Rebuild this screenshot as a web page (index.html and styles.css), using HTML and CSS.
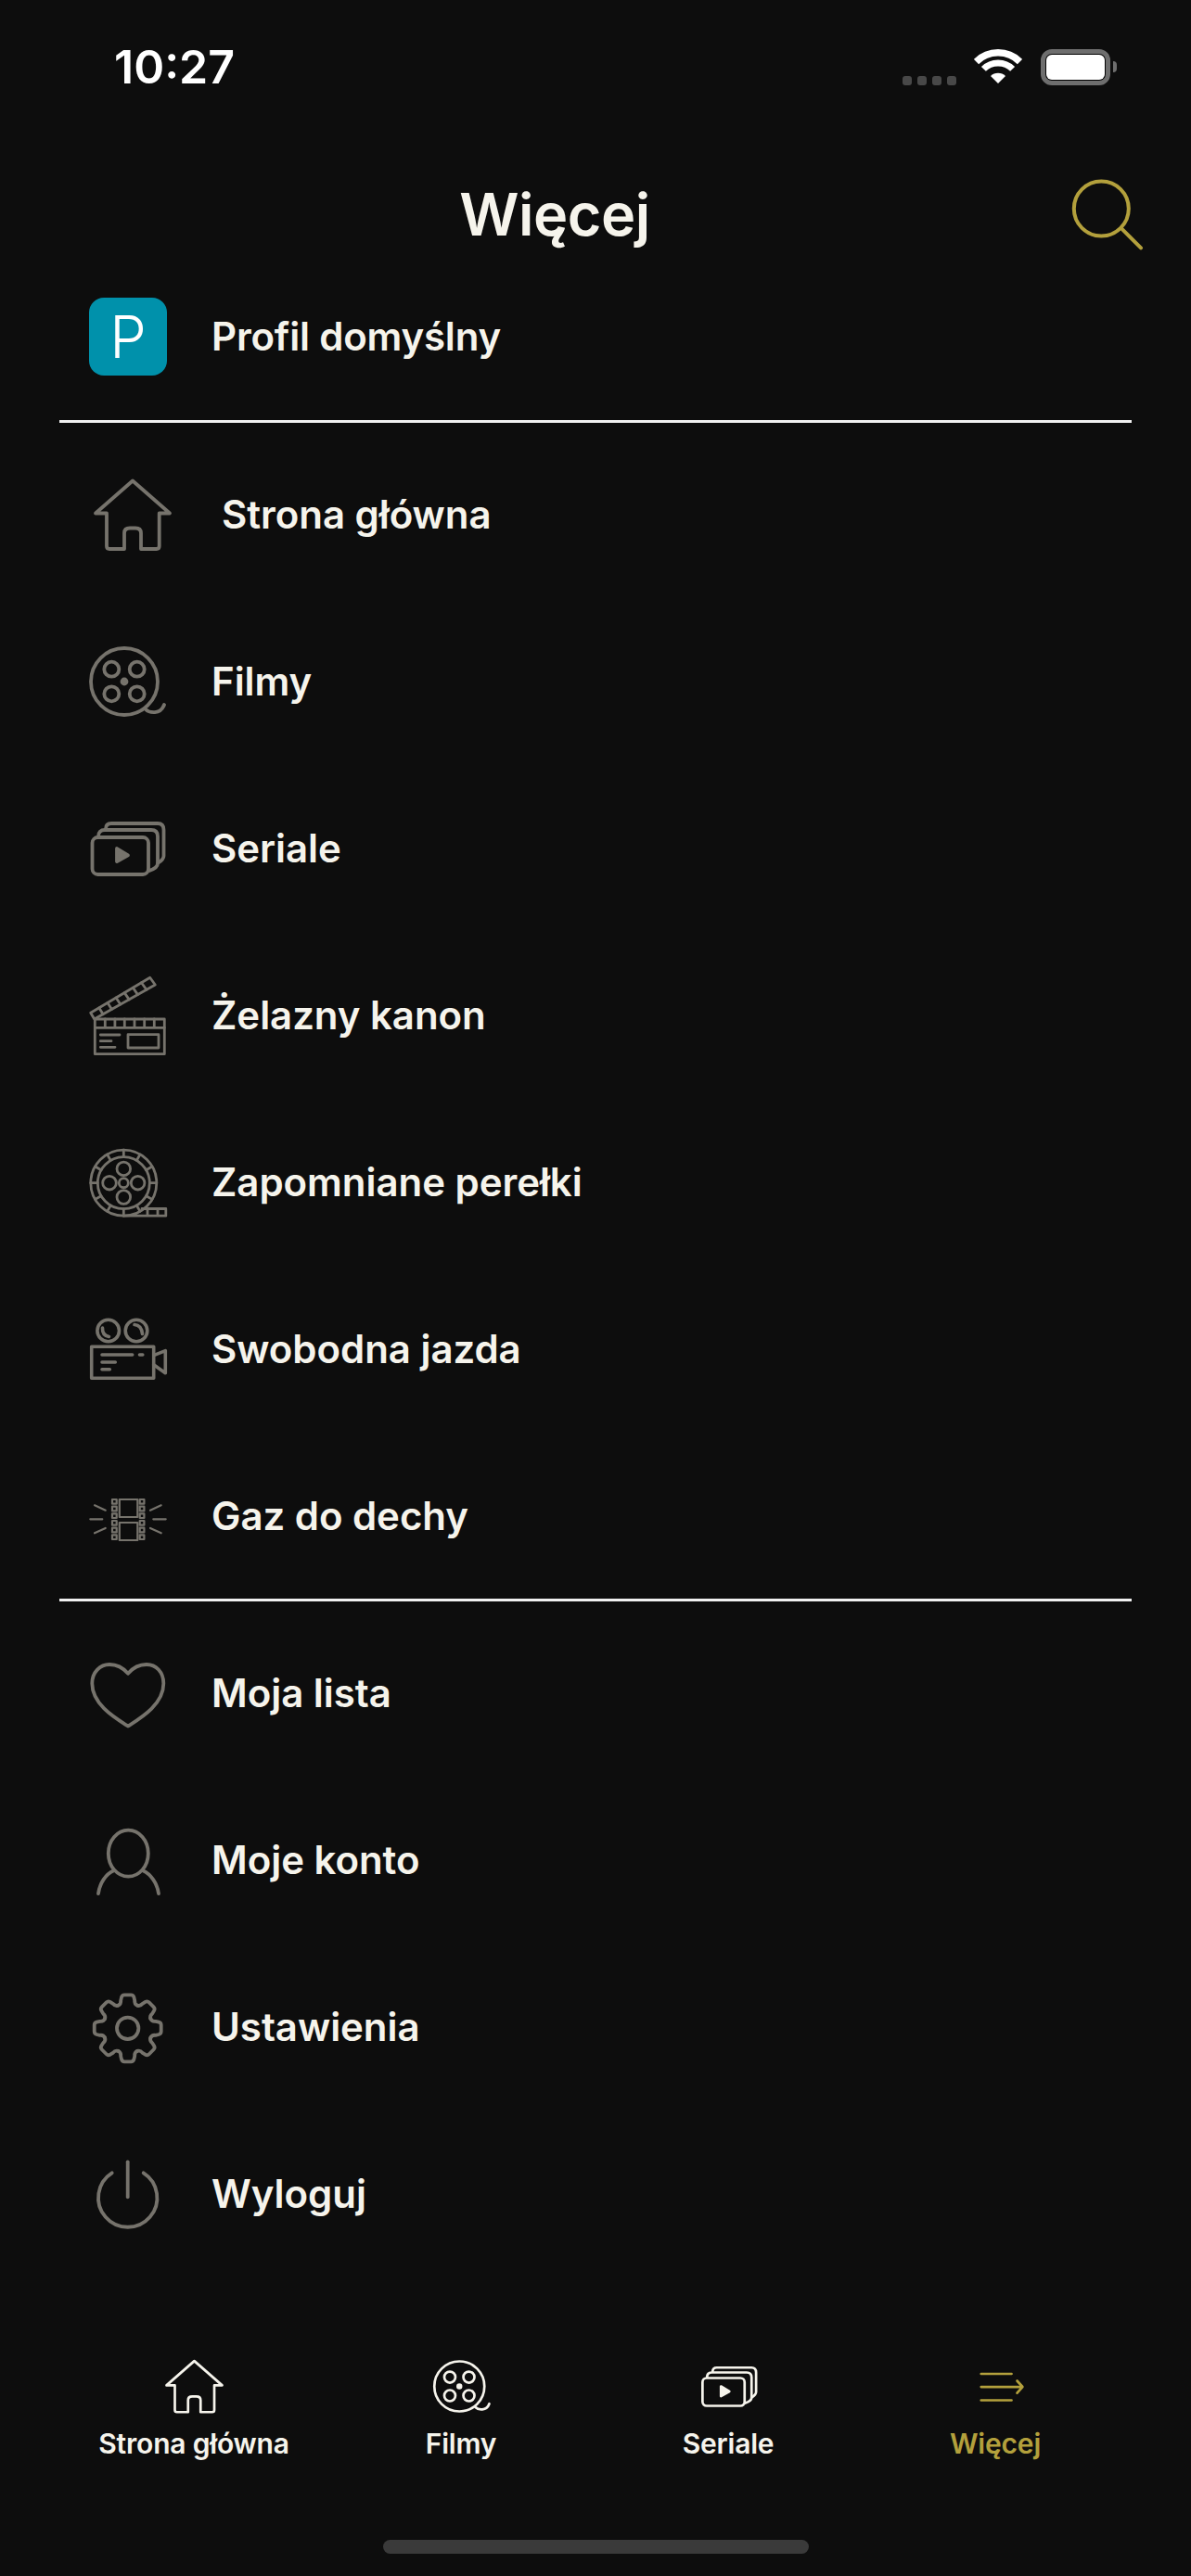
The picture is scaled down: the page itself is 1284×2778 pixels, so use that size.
FILE: index.html
```html
<!DOCTYPE html>
<html lang="pl">
<head>
<meta charset="utf-8">
<title>Więcej</title>
<link rel="stylesheet" href="styles.css">
</head>
<body>
<svg class="sprite" width="0" height="0" aria-hidden="true">
  <defs>
    <symbol id="i-home" viewBox="0 0 100 100">
      <path d="M50 13.5 L90 48.5 H78.7 V84 Q78.7 87 75.7 87 H59 V70 Q59 64.5 53 64.5 H47 Q41 64.5 41 70 V87 H25 Q22 87 22 84 V48.5 H10 Z"/>
    </symbol>
    <symbol id="i-film" viewBox="0 0 100 100">
      <circle cx="47" cy="50" r="36"/>
      <circle cx="33.3" cy="36.7" r="8"/>
      <circle cx="60.7" cy="36.7" r="8"/>
      <circle cx="33.3" cy="63.3" r="8"/>
      <circle cx="60.7" cy="63.3" r="8"/>
      <circle class="solid" cx="47" cy="50" r="2.5"/>
      <path d="M70 80 C74 84 86 86 90 75"/>
    </symbol>
    <symbol id="i-series" viewBox="0 0 100 100">
      <rect x="12.5" y="38" width="60.5" height="40" rx="6"/>
      <path d="M19 37 Q19 30 26 30 H76 Q83 30 83 37 V66 Q83 71 74 74"/>
      <path d="M27 29 Q27 23 33 23 H83 Q89.5 23 89.5 30 V58 Q89.5 62 83 66"/>
      <path class="solid" d="M39 50 L51 57.3 L39 64 Z"/>
    </symbol>
  </defs>
</svg>

<main class="screen">
  <div class="status">
    <span class="clock">10:27</span>
    <div class="status-icons">
      <div class="signal"><i></i><i></i><i></i><i></i></div>
      <svg class="wifi" viewBox="0 0 52 40" width="52" height="40">
        <path class="wifi-arc" stroke-width="7.5" d="M2.5 14.5 A33.3 33.3 0 0 1 49.5 14.5"/>
        <path class="wifi-arc" stroke-width="7" d="M10.4 22.4 A22 22 0 0 1 41.6 22.4"/>
        <path class="wifi-dot" d="M26 38 L18 30 A11.3 11.3 0 0 1 34 30 Z"/>
      </svg>
      <div class="battery"><div class="battery-level"></div></div>
    </div>
  </div>

  <header class="header">
    <h1 class="title">Więcej</h1>
    <svg class="search" viewBox="0 0 88 88" width="88" height="88">
      <circle cx="35.3" cy="37" r="29.5"/>
      <path d="M57.3 58.7 L78 79.3"/>
    </svg>
  </header>

  <div class="profile">
    <div class="avatar">P</div>
    <span class="label">Profil domyślny</span>
  </div>
  <hr class="rule">

  <nav class="menu">
    <a class="row row-home">
      <svg class="icon"><use href="#i-home"/></svg>
      <span class="label">Strona główna</span>
    </a>
    <a class="row">
      <svg class="icon"><use href="#i-film"/></svg>
      <span class="label">Filmy</span>
    </a>
    <a class="row">
      <svg class="icon"><use href="#i-series"/></svg>
      <span class="label">Seriale</span>
    </a>
    <a class="row">
      <svg class="icon icon-fine" viewBox="0 0 100 100">
        <rect x="15.3" y="54" width="75" height="37.7"/>
        <path d="M15.3 63.3 H90.3 M26.3 54 V63.3 M36.9 54 V63.3 M47.3 54 V63.3 M58 54 V63.3 M68.7 54 V63.3 M79.3 54 V63.3"/>
        <path d="M21.3 71 H42 M21.3 77.7 H33 M21.3 84.3 H37"/>
        <rect x="51" y="70.7" width="33" height="14.3"/>
        <path d="M10.7 47.3 L74.7 9.3 L80.3 17 L14.7 54 Z"/>
        <path d="M19.9 41.9 L24.1 48.7 M29 36.4 L33.5 43.4 M38.1 31 L42.8 38.1 M47.2 25.6 L52.2 32.9 M56.4 20.2 L61.5 27.6 M65.5 14.7 L70.9 22.3"/>
      </svg>
      <span class="label">Żelazny kanon</span>
    </a>
    <a class="row">
      <svg class="icon icon-fine" viewBox="0 0 100 100">
        <circle cx="46.3" cy="50.7" r="35.5"/>
        <circle cx="46.3" cy="50.7" r="28"/>
        <circle cx="46.3" cy="50.7" r="5"/>
        <circle cx="46.3" cy="35.4" r="7.3"/>
        <circle cx="46.3" cy="66" r="7.3"/>
        <circle cx="31" cy="50.7" r="7.3"/>
        <circle cx="61.6" cy="50.7" r="7.3"/>
        <path d="M46.3 15.2 V22.7 M46.3 78.7 V86.2 M10.8 50.7 H18.3 M74.3 50.7 H81.8 M28.6 20 L32.3 26.4 M60.3 75 L64 81.4 M15.6 33 L22 36.7 M70.6 64.7 L77 68.4 M15.6 68.4 L22 64.7 M70.6 36.7 L77 33 M28.6 81.4 L32.3 75 M60.3 26.4 L64 20"/>
        <path d="M46.3 86.2 H91.8 V78.5 H66 M72 78.5 V86.2 M83 78.5 V86.2"/>
      </svg>
      <span class="label">Zapomniane perełki</span>
    </a>
    <a class="row">
      <svg class="icon icon-mid" viewBox="0 0 100 100">
        <circle cx="29.7" cy="30" r="11.8"/>
        <circle cx="60" cy="30" r="11.8"/>
        <path d="M23.5 27 Q23 35 30.5 36.5 M58 23.5 Q65.5 24 66.5 33.5"/>
        <rect x="11.7" y="47.3" width="67" height="34"/>
        <path d="M78.7 56.7 L91.3 51.7 V75.7 L78.7 66.7"/>
        <path d="M23 56 H55.7 M63.5 56 H66.8 M23 64 H37.3 M23 71.7 H31.3"/>
      </svg>
      <span class="label">Swobodna jazda</span>
    </a>
    <a class="row">
      <svg class="icon icon-thin" viewBox="0 0 100 100">
        <rect x="34" y="32" width="4.7" height="4.7"/>
        <rect x="34" y="39.7" width="4.7" height="4.7"/>
        <rect x="34" y="47.3" width="4.7" height="4.7"/>
        <rect x="34" y="55" width="4.7" height="4.7"/>
        <rect x="34" y="62.7" width="4.7" height="4.7"/>
        <rect x="34" y="70.3" width="4.7" height="4.7"/>
        <rect x="63.7" y="32" width="4.7" height="4.7"/>
        <rect x="63.7" y="39.7" width="4.7" height="4.7"/>
        <rect x="63.7" y="47.3" width="4.7" height="4.7"/>
        <rect x="63.7" y="55" width="4.7" height="4.7"/>
        <rect x="63.7" y="62.7" width="4.7" height="4.7"/>
        <rect x="63.7" y="70.3" width="4.7" height="4.7"/>
        <rect x="41.8" y="32" width="19.5" height="19"/>
        <rect x="41.8" y="57" width="19.5" height="19"/>
        <path d="M15 38.3 L26.7 43.7 M10.3 53.3 H23.3 M15 68.3 L26.7 63 M75 43.7 L86.7 38.3 M78.3 53.3 H91.7 M75 63 L86.7 68.3"/>
      </svg>
      <span class="label">Gaz do dechy</span>
    </a>
  </nav>
  <hr class="rule rule-second">

  <nav class="menu">
    <a class="row">
      <svg class="icon" viewBox="0 0 100 100">
        <path d="M51 85.5 C37 76.5 12.3 62 12.3 39.5 C12.3 27 21 19 31 19 C39.5 19 46 23 51 28.7 C56 23 62.5 19 71 19 C81 19 89.3 27 89.3 39.5 C89.3 62 65 76.5 51 85.5 Z"/>
      </svg>
      <span class="label">Moja lista</span>
    </a>
    <a class="row">
      <svg class="icon" viewBox="0 0 100 100">
        <ellipse cx="51.3" cy="42.7" rx="21.5" ry="25"/>
        <path d="M35.7 61.3 C27 65 20.5 75 19 86 M67 61.3 C75.5 65 82.5 75 84 86"/>
      </svg>
      <span class="label">Moje konto</span>
    </a>
    <a class="row">
      <svg class="icon" viewBox="0 0 100 100">
        <circle cx="50.7" cy="51.3" r="11.7"/>
        <g transform="translate(50.7 51.3)">
          <path id="gear-tooth" d="M-10.5 -24.5 Q-7 -26 -7.5 -30 L-6.7 -33.5 Q-6 -36 -3.5 -36 H3.5 Q6 -36 6.7 -33.5 L7.5 -30 Q7 -26 10.5 -24.5"/>
          <use href="#gear-tooth" transform="rotate(45)"/>
          <use href="#gear-tooth" transform="rotate(90)"/>
          <use href="#gear-tooth" transform="rotate(135)"/>
          <use href="#gear-tooth" transform="rotate(180)"/>
          <use href="#gear-tooth" transform="rotate(225)"/>
          <use href="#gear-tooth" transform="rotate(270)"/>
          <use href="#gear-tooth" transform="rotate(315)"/>
        </g>
      </svg>
      <span class="label">Ustawienia</span>
    </a>
    <a class="row">
      <svg class="icon" viewBox="0 0 100 100">
        <path d="M33.7 27.3 A31.7 31.7 0 1 0 67.7 27.3"/>
        <path d="M50.7 15.3 V53.3"/>
      </svg>
      <span class="label">Wyloguj</span>
    </a>
  </nav>

  <footer class="tabs">
    <a class="tab">
      <svg class="tab-icon"><use href="#i-home"/></svg>
      <span>Strona główna</span>
    </a>
    <a class="tab">
      <svg class="tab-icon"><use href="#i-film"/></svg>
      <span>Filmy</span>
    </a>
    <a class="tab">
      <svg class="tab-icon"><use href="#i-series"/></svg>
      <span>Seriale</span>
    </a>
    <a class="tab tab-active">
      <svg class="tab-icon" viewBox="0 0 100 100">
        <path d="M29 32 H72.7 M29 50.7 H88 M29 70 H72.7 M80.7 42 L88.5 50.7 L80.7 59.5"/>
      </svg>
      <span>Więcej</span>
    </a>
  </footer>
  <div class="home-bar"></div>
</main>
</body>
</html>
```

FILE: styles.css
```css
* {
  box-sizing: border-box;
}

html,
body {
  margin: 0;
  background: #0d0d0d;
}

.sprite {
  position: absolute;
}

.screen {
  display: flex;
  flex-direction: column;
  width: 1284px;
  height: 2778px;
  overflow: hidden;
  background: #0d0d0d;
  color: #f6f4ec;
  font-family: Inter, "Noto Sans", sans-serif;
}

/* status bar */
.status {
  display: flex;
  flex: none;
  justify-content: space-between;
  height: 172px;
  padding: 53px 87px 0 123px;
}

.clock {
  color: #fff;
  font-size: 50px;
  font-weight: 600;
  line-height: 38px;
}

.status-icons {
  display: flex;
  align-items: flex-end;
  height: 39px;
}

.signal {
  display: flex;
  gap: 6px;
  margin-right: 19px;
}

.signal i {
  width: 10px;
  height: 10px;
  border-radius: 3px;
  background: #484848;
}

.wifi {
  display: block;
  margin-right: 20px;
}

.wifi-arc {
  fill: none;
  stroke: #fff;
}

.wifi-dot {
  fill: #fff;
}

.battery {
  position: relative;
  width: 75px;
  height: 39px;
  padding: 1px;
  border: 5px solid #6e6e6e;
  border-radius: 12px;
  background: #000;
}

.battery::after {
  content: "";
  position: absolute;
  top: 8px;
  right: -12px;
  width: 4px;
  height: 12px;
  border-radius: 0 4px 4px 0;
  background: #6e6e6e;
}

.battery-level {
  height: 100%;
  border-radius: 6px;
  background: #fff;
}

/* page header */
.header {
  display: flex;
  flex: none;
  align-items: center;
  height: 120px;
  padding: 0 44px;
}

.title {
  flex: 1;
  margin: 0;
  padding-bottom: 2px;
  font-size: 63px;
  font-weight: 600;
  letter-spacing: -0.5px;
  line-height: 76px;
  text-align: center;
}

.search {
  flex: none;
  fill: none;
  stroke: #b3a03c;
  stroke-linecap: round;
  stroke-width: 4;
}

/* profile and menu */
.profile {
  display: flex;
  flex: none;
  align-items: center;
  gap: 48px;
  height: 84px;
  margin-top: 29px;
  padding-left: 96px;
}

.profile .label {
  letter-spacing: -0.2px;
}

.avatar {
  display: flex;
  align-items: center;
  justify-content: center;
  width: 84px;
  height: 84px;
  border-radius: 16px;
  background: #0091ab;
  color: #fff;
  font-size: 63px;
  font-weight: 300;
}

.label {
  padding-bottom: 2px;
  font-size: 42px;
  font-weight: 600;
  letter-spacing: -0.05px;
  white-space: nowrap;
}

.rule {
  flex: none;
  width: 1156px;
  height: 3px;
  margin: 48px 64px 9px;
  border: 0;
  background: #f0f0f0;
}

.rule-second {
  margin-top: -1px;
  margin-bottom: 9px;
}

.menu {
  display: flex;
  flex: none;
  flex-direction: column;
}

.row {
  display: flex;
  align-items: center;
  gap: 41px;
  height: 180px;
  padding-left: 87px;
}

.row-home {
  gap: 46px;
  padding-left: 93px;
}

.icon {
  flex: none;
  width: 100px;
  height: 100px;
  color: #76736c;
  fill: none;
  stroke: #76736c;
  stroke-linecap: round;
  stroke-linejoin: round;
  stroke-width: 3.8;
}

.icon-mid {
  stroke-width: 3.6;
}

.icon-fine {
  stroke-width: 2.8;
}

.icon-thin {
  stroke-width: 2.2;
}

.solid {
  fill: currentColor;
}

/* bottom tab bar */
.tabs {
  display: grid;
  flex: none;
  grid-template-columns: repeat(4, 288px);
  margin-top: auto;
  padding-left: 65px;
}

.tab {
  display: flex;
  flex-direction: column;
  align-items: center;
  gap: 6px;
  font-size: 30px;
  font-weight: 600;
  letter-spacing: -0.2px;
  white-space: nowrap;
}

.tab-icon {
  width: 75px;
  height: 75px;
  fill: none;
  stroke: currentColor;
  stroke-linecap: round;
  stroke-linejoin: round;
  stroke-width: 3.6;
}

.tab-active {
  color: #b3a03c;
}

.home-bar {
  flex: none;
  width: 459px;
  height: 15px;
  margin: 86px 0 24px 413px;
  border-radius: 8px;
  background: #3a3a3a;
}
```
